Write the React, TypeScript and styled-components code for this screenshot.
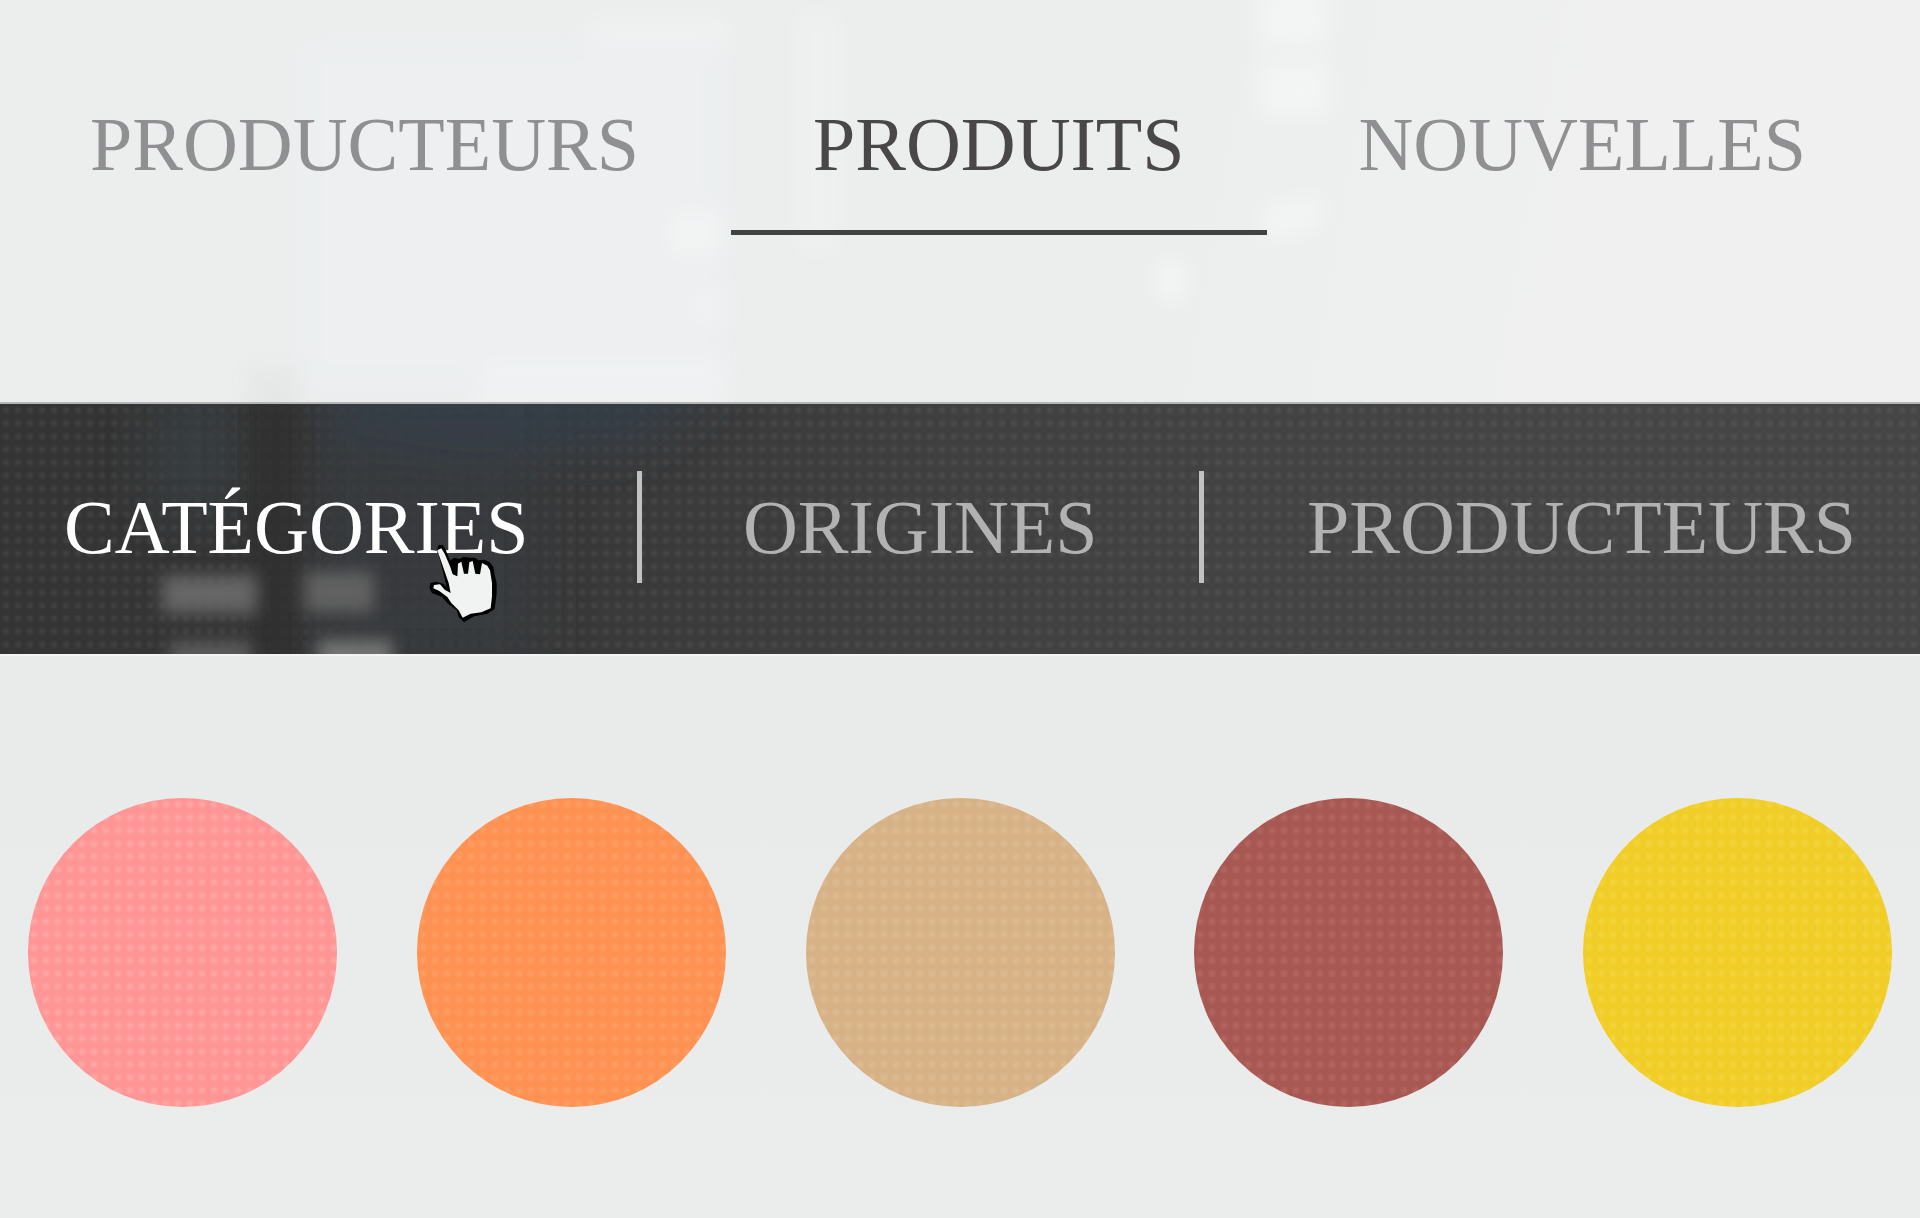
import React, { useState } from "react";
import styled, { createGlobalStyle, css } from "styled-components";

const GlobalStyle = createGlobalStyle`
  *, *::before, *::after { box-sizing: border-box; }
  body {
    margin: 0;
    background: #e9ebeb;
    font-family: "Liberation Serif", "Times New Roman", serif;
  }
`;

/* Fine woven dots, shared by the bar and the swatches */
const weave = css<{ $dot: string }>`
  background-image: radial-gradient(circle, ${(p) => p.$dot} 1px, transparent 5px);
  background-size: 12px 13px;
`;

const Page = styled.div`
  min-height: 100vh;
  background: linear-gradient(180deg, #e6e8e8, #ebeded);
`;

const Header = styled.header`
  position: relative;
  padding: 100px 32px 167px 8px;
  background: linear-gradient(100deg, #eceeee 0%, #eceeee 60%, #f0f0f0 85%);
  border-bottom: 2px solid #b4b6b7;
`;

const Backdrop = styled.svg`
  position: absolute;
  inset: 0;
  width: 100%;
  height: 100%;
  pointer-events: none;
`;

const MainNav = styled.nav`
  position: relative;
  display: flex;
  justify-content: space-between;
`;

const navText = css`
  font-size: 76px;
  line-height: 88px;
  text-decoration: none;
  white-space: nowrap;
`;

const MainLink = styled.a<{ $active: boolean }>`
  ${navText}
  padding: 0 82px 42px;
  color: ${(p) => (p.$active ? "#4a4748" : "#909092")};
  border-bottom: 5px solid ${(p) => (p.$active ? "#3f4343" : "transparent")};
`;

const Bar = styled.div`
  position: relative;
  background: linear-gradient(100deg, #343434 0%, #363636 25%, #404040 50%, #454545 80%);
`;

const Weave = styled.div<{ $dot: string }>`
  ${weave}
`;

const SubNav = styled.nav`
  position: relative;
  display: grid;
  grid-template-columns: 8fr auto 7fr auto 9fr;
  align-items: center;
  justify-items: center;
  height: 250px;
  padding-bottom: 4px;
`;

const SubLink = styled.a<{ $active: boolean }>`
  ${navText}
  position: relative;
  color: ${(p) => (p.$active ? "#ffffff" : "#b2b2b3")};

  &:first-child {
    justify-self: start;
    margin-left: 64px;
  }

  &:last-child {
    justify-self: end;
    margin-right: 64px;
  }
`;

const Separator = styled.span`
  width: 5px;
  height: 112px;
  background: #c2c2c2;
`;

const Hand = styled.svg`
  position: absolute;
  top: 58px;
  right: 29px;
  width: 75px;
  height: 84px;
  pointer-events: none;
`;

const Palette = styled.main`
  display: flex;
  justify-content: space-between;
  padding: 142px 28px 110px;
  border-top: 2px solid #f3f4f4;
`;

const Swatch = styled.button<{ $color: string; $dot: string }>`
  width: 309px;
  aspect-ratio: 1;
  padding: 0;
  border: 0;
  border-radius: 50%;
  background-color: ${(p) => p.$color};
  ${weave}
  cursor: pointer;
`;

const pages = ["PRODUCTEURS", "PRODUITS", "NOUVELLES"];
const filters = ["CATÉGORIES", "ORIGINES", "PRODUCTEURS"];
const swatches = [
  { name: "Rose", color: "#ff9695", dot: "#ffa6a4" },
  { name: "Orange", color: "#ff9253", dot: "#ff9c62" },
  { name: "Beige", color: "#d7b286", dot: "#dcbb92" },
  { name: "Rouge", color: "#a85852", dot: "#b2655f" },
  { name: "Jaune", color: "#f1cd28", dot: "#f3d43a" },
];

function HeaderGlow() {
  return (
    <Backdrop viewBox="0 0 1920 403" preserveAspectRatio="none" aria-hidden="true">
      <defs>
        <filter id="soft" x="-50%" y="-50%" width="200%" height="200%">
          <feGaussianBlur stdDeviation="11" />
        </filter>
      </defs>
      <g filter="url(#soft)" fill="#ffffff">
        <rect x="590" y="16" width="135" height="34" opacity=".2" />
        <rect x="300" y="40" width="425" height="350" fill="#f0f1f4" opacity=".3" />
        <rect x="480" y="360" width="245" height="60" opacity=".2" />
        <rect x="795" y="10" width="45" height="245" opacity=".16" />
        <rect x="1258" y="-10" width="70" height="55" opacity=".38" />
        <rect x="1258" y="62" width="70" height="55" opacity=".38" />
        <path d="M1262 205 1325 195 1318 228 1262 245Z" opacity=".35" />
        <rect x="668" y="212" width="52" height="44" opacity=".3" />
        <rect x="690" y="290" width="36" height="34" opacity=".2" />
        <ellipse cx="1171" cy="281" rx="14" ry="22" opacity=".5" />
        <rect x="248" y="370" width="52" height="60" fill="#dfe1e2" opacity=".5" />
      </g>
    </Backdrop>
  );
}

function BarGlow() {
  return (
    <Backdrop viewBox="0 0 1920 250" preserveAspectRatio="none" aria-hidden="true">
      <defs>
        <filter id="haze" x="-50%" y="-50%" width="200%" height="200%">
          <feGaussianBlur stdDeviation="24" />
        </filter>
        <filter id="light" x="-50%" y="-50%" width="200%" height="200%">
          <feGaussianBlur stdDeviation="8" />
        </filter>
      </defs>
      <g filter="url(#haze)">
        <rect x="150" y="-10" width="90" height="120" fill="#3a3e42" opacity=".8" />
        <rect x="310" y="-10" width="230" height="270" fill="#3a3c3f" opacity=".8" />
        <path d="M330-30H730L640 40 480 50 330 30Z" fill="#36404a" opacity=".8" />
      </g>
      <g filter="url(#light)">
        <rect x="246" y="-10" width="54" height="270" fill="#303030" opacity=".8" />
        <rect x="163" y="172" width="92" height="37" fill="#666666" />
        <rect x="306" y="168" width="68" height="40" fill="#626262" />
        <rect x="170" y="238" width="80" height="30" fill="#5c5c5c" />
        <rect x="318" y="236" width="74" height="30" fill="#747474" />
      </g>
    </Backdrop>
  );
}

function HandCursor() {
  return (
    <Hand viewBox="72 34 225 252" aria-hidden="true">
      <path
        d="M112 58 116 46 128 46 136 58 150 92 164 84 178 88 190 82 212 84 224 84 236 92 252 90 268 96 280 112 284 136 290 160 290 190 284 238 262 252 222 260 192 278 176 262 170 242 144 222 126 202 96 190 88 174 92 160 108 156 130 162 140 172Z"
        fill="#000000"
      />
      <path
        d="M112 62 124 56 134 72 150 110 158 134 172 140 174 102 184 96 192 132 204 132 208 98 218 94 226 132 240 134 246 100 262 108 270 122 276 160 276 200 272 236 244 248 212 252 188 264 176 242 154 220 142 202 118 184 100 176 102 166 120 164 134 180 152 190 146 160Z"
        fill="#f1f2f2"
      />
    </Hand>
  );
}

export default function App() {
  const [page, setPage] = useState(1);
  const [filter, setFilter] = useState(0);

  return (
    <Page>
      <GlobalStyle />
      <Header>
        <HeaderGlow />
        <MainNav aria-label="Navigation principale">
          {pages.map((label, i) => (
            <MainLink key={label} href="#" $active={i === page} onClick={() => setPage(i)}>
              {label}
            </MainLink>
          ))}
        </MainNav>
      </Header>
      <Bar>
        <BarGlow />
        <Weave $dot="rgba(255, 255, 255, 0.06)">
          <SubNav aria-label="Filtres">
            {filters.map((label, i) => (
              <React.Fragment key={label}>
                {i > 0 && <Separator />}
                <SubLink href="#" $active={i === filter} onClick={() => setFilter(i)}>
                  {label}
                  {i === 0 && <HandCursor />}
                </SubLink>
              </React.Fragment>
            ))}
          </SubNav>
        </Weave>
      </Bar>
      <Palette>
        {swatches.map((s) => (
          <Swatch key={s.name} aria-label={s.name} $color={s.color} $dot={s.dot} />
        ))}
      </Palette>
    </Page>
  );
}
